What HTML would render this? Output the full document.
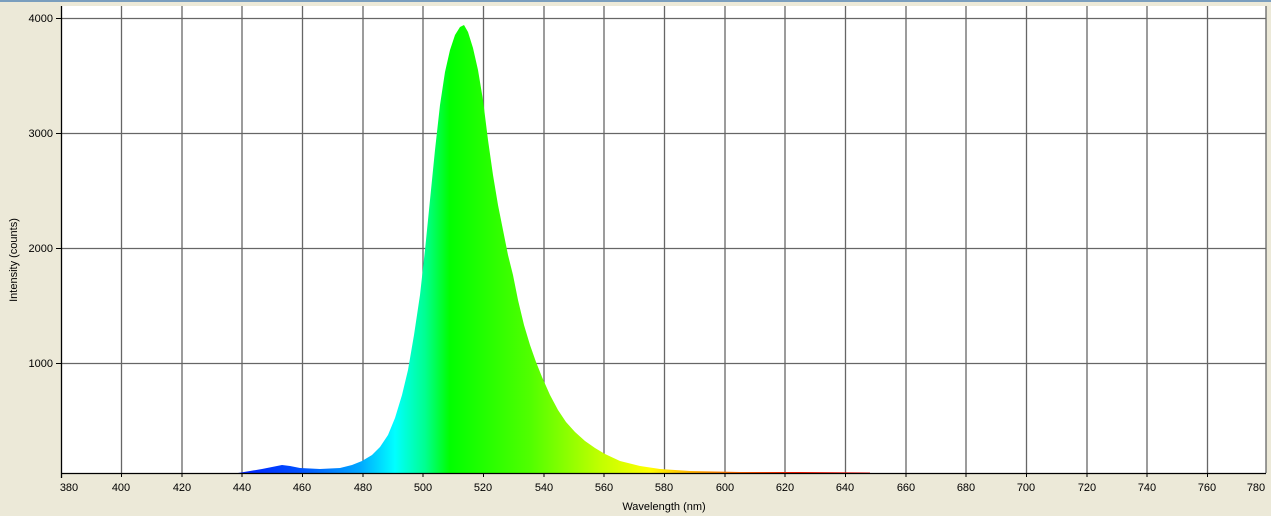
<!DOCTYPE html>
<html><head><style>
html,body{margin:0;padding:0;width:1271px;height:516px;overflow:hidden;background:#ece9d8;font-family:"Liberation Sans",sans-serif;}
</style></head><body>
<svg width="1271" height="516" xmlns="http://www.w3.org/2000/svg" style="position:absolute;left:0;top:0">
<defs>
<linearGradient id="g" gradientUnits="userSpaceOnUse" x1="240" y1="0" x2="870" y2="0">
<stop offset="0" stop-color="#0020ff"/>
<stop offset="0.095" stop-color="#0050ff"/>
<stop offset="0.19" stop-color="#00a8ff"/>
<stop offset="0.246" stop-color="#00ffff"/>
<stop offset="0.294" stop-color="#00ff90"/>
<stop offset="0.333" stop-color="#00ff00"/>
<stop offset="0.46" stop-color="#50ff00"/>
<stop offset="0.571" stop-color="#c0ff00"/>
<stop offset="0.65" stop-color="#ffff00"/>
<stop offset="0.76" stop-color="#ff8000"/>
<stop offset="0.87" stop-color="#ff2000"/>
<stop offset="1" stop-color="#ff0000"/>
</linearGradient>
</defs>
<rect x="0" y="0" width="1271" height="2" fill="#7a9ebe"/>
<rect x="61" y="6" width="1205" height="467" fill="#fff"/>
<g stroke="#666" stroke-width="1.3">
<line x1="121.5" y1="6" x2="121.5" y2="473"/><line x1="182" y1="6" x2="182" y2="473"/><line x1="242" y1="6" x2="242" y2="473"/><line x1="302.5" y1="6" x2="302.5" y2="473"/><line x1="363" y1="6" x2="363" y2="473"/><line x1="423" y1="6" x2="423" y2="473"/><line x1="483.5" y1="6" x2="483.5" y2="473"/><line x1="544" y1="6" x2="544" y2="473"/><line x1="604" y1="6" x2="604" y2="473"/><line x1="664.5" y1="6" x2="664.5" y2="473"/><line x1="725" y1="6" x2="725" y2="473"/><line x1="785" y1="6" x2="785" y2="473"/><line x1="845.5" y1="6" x2="845.5" y2="473"/><line x1="906" y1="6" x2="906" y2="473"/><line x1="966" y1="6" x2="966" y2="473"/><line x1="1026.5" y1="6" x2="1026.5" y2="473"/><line x1="1087" y1="6" x2="1087" y2="473"/><line x1="1147" y1="6" x2="1147" y2="473"/><line x1="1207.5" y1="6" x2="1207.5" y2="473"/><line x1="1266" y1="6" x2="1266" y2="473"/>
<line x1="61" y1="18.5" x2="1266" y2="18.5"/><line x1="61" y1="133.5" x2="1266" y2="133.5"/><line x1="61" y1="248.5" x2="1266" y2="248.5"/><line x1="61" y1="363.5" x2="1266" y2="363.5"/>
</g>
<polygon fill="url(#g)" points="238,473 250,471 262,469 272,467 282,465 290,466 300,468 320,469 340,468 352,465 362,461 372,455 380,447 388,435 395,418 402,395 408,370 414,335 420,295 425,250 430,200 435,150 440,105 445,72 450,50 455,35 460,27 464,25 468,32 473,48 478,70 483,100 488,140 493,175 498,205 503,230 508,255 513,275 518,300 524,325 530,345 536,362 542,377 550,395 558,410 566,422 575,432 585,441 595,448 605,454 620,461 640,466 660,469 690,471 740,472 800,472 870,472.5 870,473"/>
<line x1="61" y1="473.5" x2="1266" y2="473.5" stroke="#000" stroke-width="1.3"/>
<line x1="61.5" y1="6" x2="61.5" y2="478" stroke="#000" stroke-width="1.3"/>
<g stroke="#000" stroke-width="1">
<line x1="56" y1="18.5" x2="61" y2="18.5"/><line x1="56" y1="133.5" x2="61" y2="133.5"/><line x1="56" y1="248.5" x2="61" y2="248.5"/><line x1="56" y1="363.5" x2="61" y2="363.5"/>
<line x1="121.5" y1="473" x2="121.5" y2="477"/><line x1="182" y1="473" x2="182" y2="477"/><line x1="242" y1="473" x2="242" y2="477"/><line x1="302.5" y1="473" x2="302.5" y2="477"/><line x1="363" y1="473" x2="363" y2="477"/><line x1="423" y1="473" x2="423" y2="477"/><line x1="483.5" y1="473" x2="483.5" y2="477"/><line x1="544" y1="473" x2="544" y2="477"/><line x1="604" y1="473" x2="604" y2="477"/><line x1="664.5" y1="473" x2="664.5" y2="477"/><line x1="725" y1="473" x2="725" y2="477"/><line x1="785" y1="473" x2="785" y2="477"/><line x1="845.5" y1="473" x2="845.5" y2="477"/><line x1="906" y1="473" x2="906" y2="477"/><line x1="966" y1="473" x2="966" y2="477"/><line x1="1026.5" y1="473" x2="1026.5" y2="477"/><line x1="1087" y1="473" x2="1087" y2="477"/><line x1="1147" y1="473" x2="1147" y2="477"/><line x1="1207.5" y1="473" x2="1207.5" y2="477"/>
</g>
<g font-size="11" fill="#000" text-anchor="end">
<text x="53" y="22">4000</text><text x="53" y="137">3000</text><text x="53" y="252">2000</text><text x="53" y="367">1000</text>
</g>
<g font-size="11" fill="#000" text-anchor="middle">
<text x="69" y="491">380</text><text x="121" y="491">400</text><text x="182" y="491">420</text><text x="242" y="491">440</text><text x="302" y="491">460</text><text x="363" y="491">480</text><text x="423" y="491">500</text><text x="483" y="491">520</text><text x="544" y="491">540</text><text x="604" y="491">560</text><text x="664" y="491">580</text><text x="725" y="491">600</text><text x="785" y="491">620</text><text x="845" y="491">640</text><text x="906" y="491">660</text><text x="966" y="491">680</text><text x="1026" y="491">700</text><text x="1087" y="491">720</text><text x="1147" y="491">740</text><text x="1207" y="491">760</text><text x="1256" y="491">780</text>
<text x="664" y="510">Wavelength (nm)</text>
<text transform="translate(17,260) rotate(-90)">Intensity (counts)</text>
</g>
</svg>
</body></html>
